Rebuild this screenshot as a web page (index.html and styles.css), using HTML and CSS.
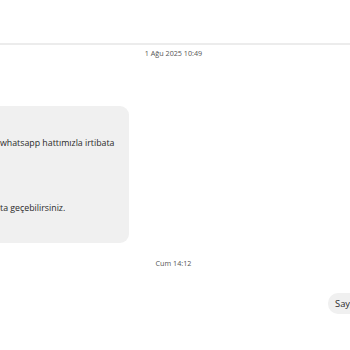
FILE: index.html
```html
<!DOCTYPE html>
<html>
<head>
<meta charset="utf-8">
<link rel="stylesheet" href="styles.css">
</head>
<body>
<div class="chat">
  <div class="divider"></div>
  <div class="stamp stamp-first">1 Ağu 2025 10:49</div>
  <div class="row-in">
    <div class="bubble-in">
      <p class="line line-1">whatsapp hattımızla irtibata</p>
      <p class="line line-2">ta geçebilirsiniz.</p>
    </div>
  </div>
  <div class="stamp stamp-second">Cum 14:12</div>
  <div class="row-out">
    <div class="bubble-out">Saygılarımızla</div>
  </div>
</div>
</body>
</html>
```
FILE: styles.css
```css
html, body {
  margin: 0;
  padding: 0;
  background: #ffffff;
  overflow: hidden;
  width: 350px;
  height: 350px;
}
.chat {
  font-family: "Open Sans", "Noto Sans", sans-serif;
  color: #2a2a2a;
  padding-top: 43px;
}
.divider {
  height: 2px;
  background: #ececec;
}
.stamp {
  text-align: center;
  font-size: 7.2px;
  color: #555;
  line-height: 10px;
  padding-right: 3px;
}
.stamp-first {
  margin-top: 3px;
}
.row-in {
  margin-top: 48px;
  display: flex;
}
.bubble-in {
  margin-left: -100px;
  width: 229px;
  height: 137px;
  box-sizing: border-box;
  background: #f0f0f0;
  border-radius: 9px;
  padding-left: 100px;
  padding-top: 31px;
  font-size: 8.8px;
  line-height: 12px;
  white-space: nowrap;
  overflow: hidden;
}
.line {
  margin: 0;
}
.line-2 {
  margin-top: 53px;
}
.stamp-second {
  margin-top: 15px;
}
.row-out {
  margin-top: 25px;
  display: flex;
  padding-left: 328px;
}
.bubble-out {
  background: #f0f0f0;
  border-radius: 10px;
  height: 21px;
  line-height: 21px;
  padding: 0 6px 0 7px;
  font-size: 9.4px;
  white-space: nowrap;
}
```
